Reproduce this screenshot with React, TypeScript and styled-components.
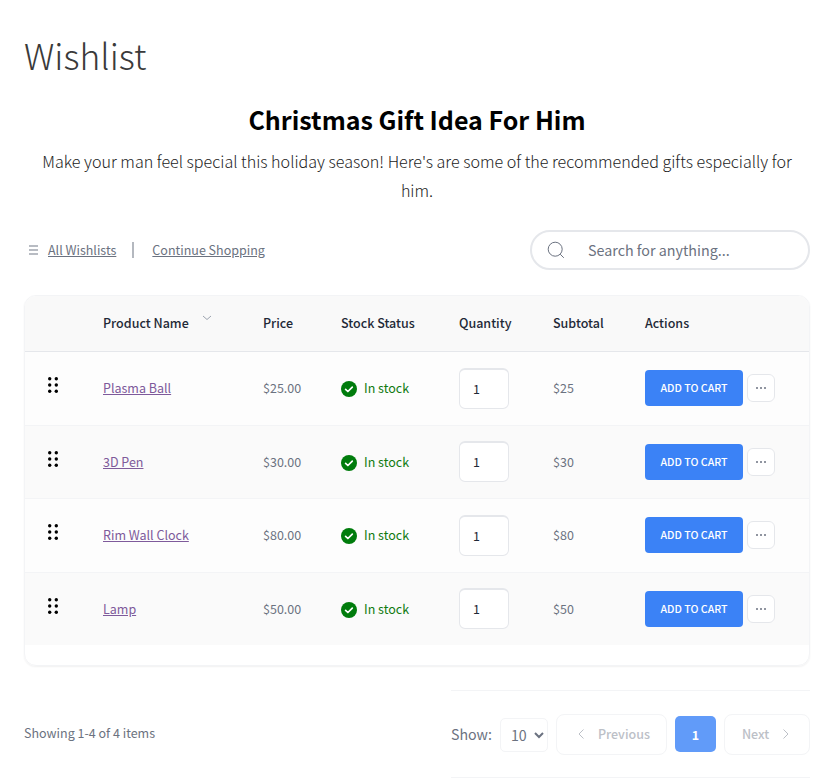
import React from "react";
import styled, { createGlobalStyle } from "styled-components";

const Global = createGlobalStyle`
  * { box-sizing: border-box; }
  html, body { margin: 0; padding: 0; background: #fff; }
  body { font-family: "Noto Sans CJK SC", "Noto Sans", sans-serif; color: #374151; overflow: hidden; }
`;

const Page = styled.div`
  width: 837px;
  height: 781px;
  padding: 24px 27px 0 24px;
  overflow: hidden;
`;
const PageTitle = styled.h1`
  margin: 0;
  font-size: 35.4px;
  line-height: 62px;
  font-weight: 300;
  color: #3a3a3a;
`;
const Intro = styled.div`
  text-align: center;
  margin-top: 13px;
`;
const IntroTitle = styled.h2`
  margin: 0;
  font-size: 25px;
  line-height: 40px;
  font-weight: 700;
  color: #000;
`;
const IntroText = styled.p`
  margin: 8px 0 0;
  padding: 0 16px;
  font-size: 16.1px;
  line-height: 29px;
  font-weight: 300;
  color: #222;
`;
const Toolbar = styled.div`
  display: flex;
  align-items: center;
  justify-content: space-between;
  margin-top: 25px;
  height: 40px;
`;
const ToolLinks = styled.div`
  display: flex;
  align-items: center;
  padding-left: 5px;
  font-size: 12.5px;
  line-height: 16px;
  color: #6b7280;
`;
const ToolLink = styled.a`
  color: #6b7280;
  text-decoration: underline;
`;
const Divider = styled.span`
  width: 2px;
  height: 16px;
  background: #b4b8bf;
  margin: 0 18px 0 16px;
`;
const MenuIcon = styled.svg`
  width: 9px;
  height: 10px;
  margin-right: 10px;
`;
const Search = styled.div`
  width: 280px;
  height: 40px;
  border: 2px solid #e5e7eb;
  border-radius: 20px;
  display: flex;
  align-items: center;
  padding-left: 15px;
  font-size: 14.3px;
  line-height: 18px;
  color: #6b7280;
  gap: 23px;
  background: #fff;
`;
const Card = styled.div`
  margin-top: 25px;
  height: 371px;
  border: 1px solid #f3f4f6;
  border-radius: 12px;
  box-shadow: 0 1px 2px rgba(0, 0, 0, 0.06);
  overflow: hidden;
`;
const Row = styled.div<{ $shade?: boolean; $height: number }>`
  display: grid;
  grid-template-columns: 78px 160px 78px 118px 94px 92px 1fr;
  align-items: center;
  height: ${(p) => p.$height}px;
  padding-bottom: 1px;
  background: ${(p) => (p.$shade ? "#fafafa" : "#fdfdfd")};
  border-bottom: 1px solid #f3f4f6;
  font-size: 12.5px;
  line-height: 16px;
  color: #6b7280;
  &:last-child { border-bottom: none; }
`;
const Head = styled(Row)`
  background: #f9f9f9;
  border-bottom: 1px solid #e5e7eb;
  font-weight: 500;
  color: #1f2937;
`;
const HeadName = styled.div`
  display: flex;
  align-items: flex-start;
  gap: 13px;
`;
const Drag = styled.div`
  padding-left: 23px;
  display: flex;
  margin-top: -6px;
`;
const NameLink = styled.a`
  color: #7e5a9b;
  text-decoration: underline;
`;
const Stock = styled.div`
  display: flex;
  align-items: center;
  gap: 7px;
  color: #107a10;
`;
const StockIcon = styled.svg`
  margin-top: 2px;
`;
const Qty = styled.div`
  width: 50px;
  height: 41px;
  border: 1px solid #e5e7eb;
  border-top-width: 2px;
  border-radius: 6px;
  background: #fff;
  padding-left: 13px;
  display: flex;
  align-items: center;
  color: #1f2937;
`;
const Actions = styled.div`
  display: flex;
  align-items: center;
  gap: 4px;
`;
const CartButton = styled.button`
  width: 98px;
  height: 36px;
  background: #3b82f6;
  color: #fff;
  border: 0;
  border-radius: 4px;
  font: 500 10.6px/14px "Noto Sans CJK SC", sans-serif;
  padding: 0;
`;
const MoreButton = styled.button`
  width: 28px;
  height: 28px;
  background: #fff;
  border: 1px solid #e5e7eb;
  border-radius: 6px;
  padding: 0;
  display: flex;
  align-items: center;
  justify-content: center;
`;
const Footer = styled.div`
  display: flex;
  justify-content: space-between;
  margin-top: 24px;
`;
const Showing = styled.div`
  font-size: 12.5px;
  line-height: 18px;
  color: #6b7280;
  margin-top: 34px;
`;
const Pager = styled.div`
  width: 359px;
  height: 88px;
  border-top: 1px solid #f3f4f6;
  border-bottom: 1px solid #f3f4f6;
  display: flex;
  align-items: center;
  font-size: 14.2px;
  color: #6b7280;
`;
const ShowSelect = styled.select`
  width: 48px;
  height: 34px;
  margin: 1px 8px 0;
  border: 1px solid #f3f4f6;
  border-radius: 5px;
  background: #fff;
  color: #6b7280;
  font: 14.2px "Noto Sans CJK SC", sans-serif;
  padding-left: 6px;
`;
const PageNav = styled.div<{ $width: number; $inset: number }>`
  width: ${(p) => p.$width}px;
  height: 41px;
  margin-top: 1px;
  padding-left: ${(p) => p.$inset}px;
  padding-bottom: 1px;
  border: 1px solid #f3f4f6;
  border-radius: 8px;
  display: flex;
  align-items: center;
  gap: 13px;
  font-size: 12.5px;
  line-height: 16px;
  font-weight: 500;
  color: #bcc0c7;
`;
const PageCurrent = styled.div`
  width: 41px;
  height: 36px;
  margin: 0 8px;
  border-radius: 5px;
  background: #619bf9;
  color: #fff;
  font-size: 12.5px;
  font-weight: 700;
  display: flex;
  align-items: center;
  justify-content: center;
`;

const DragDots = () => (
  <svg width="10" height="16" viewBox="0 0 10 16" fill="#000">
    {[1.8, 8, 14.2].flatMap((y) => [0, 1].map((i) => <circle key={`${y}-${i}`} cx={i ? 8.3 : 1.7} cy={y} r="1.7" />))}
  </svg>
);
const Check = () => (
  <StockIcon width="16" height="16" viewBox="0 0 16 16">
    <circle cx="8" cy="8" r="8" fill="#007c0c" />
    <path d="M4.6 8.3l2.3 2.2 4.4-4.4" fill="none" stroke="#fff" strokeWidth="1.7" strokeLinecap="round" strokeLinejoin="round" />
  </StockIcon>
);
const Dots = () => (
  <svg width="12" height="4" viewBox="0 0 12 4" fill="#6b7280">
    <circle cx="2" cy="2" r="1" />
    <circle cx="6" cy="2" r="1" />
    <circle cx="10" cy="2" r="1" />
  </svg>
);

const products = [
  { name: "Plasma Ball", price: "$25.00", sub: "$25", h: 74, shade: false },
  { name: "3D Pen", price: "$30.00", sub: "$30", h: 73, shade: true },
  { name: "Rim Wall Clock", price: "$80.00", sub: "$80", h: 74, shade: false },
  { name: "Lamp", price: "$50.00", sub: "$50", h: 72, shade: true },
];

export default function App() {
  return (
    <Page>
      <Global />
      <PageTitle>Wishlist</PageTitle>
      <Intro>
        <IntroTitle>Christmas Gift Idea For Him</IntroTitle>
        <IntroText>
          Make your man feel special this holiday season! Here's are some of the recommended gifts especially for him.
        </IntroText>
      </Intro>
      <Toolbar>
        <ToolLinks>
          <MenuIcon viewBox="0 0 9 10" fill="#b8bcc3">
            <rect y="0" width="9" height="2" />
            <rect y="4" width="9" height="2" />
            <rect y="8" width="9" height="2" />
          </MenuIcon>
          <ToolLink>All Wishlists</ToolLink>
          <Divider />
          <ToolLink>Continue Shopping</ToolLink>
        </ToolLinks>
        <Search>
          <svg width="18" height="18" viewBox="0 0 18 18" fill="none" stroke="#6b7280" strokeWidth="1">
            <circle cx="8.2" cy="8.2" r="7" />
            <path d="M13.2 13.2l3.6 3.6" />
          </svg>
          <span>Search for anything...</span>
        </Search>
      </Toolbar>
      <Card>
        <Head $height={56}>
          <div />
          <HeadName>
            Product Name
            <svg width="10" height="6" viewBox="0 0 10 6" fill="none" stroke="#9ca3af" strokeWidth="1">
              <path d="M1 1l4 3.5L9 1" />
            </svg>
          </HeadName>
          <div>Price</div>
          <div>Stock Status</div>
          <div>Quantity</div>
          <div>Subtotal</div>
          <div>Actions</div>
        </Head>
        {products.map((p) => (
          <Row key={p.name} $height={p.h} $shade={p.shade}>
            <Drag>
              <DragDots />
            </Drag>
            <div>
              <NameLink>{p.name}</NameLink>
            </div>
            <div>{p.price}</div>
            <Stock>
              <Check />
              In stock
            </Stock>
            <Qty>1</Qty>
            <div>{p.sub}</div>
            <Actions>
              <CartButton>ADD TO CART</CartButton>
              <MoreButton>
                <Dots />
              </MoreButton>
            </Actions>
          </Row>
        ))}
      </Card>
      <Footer>
        <Showing>Showing 1-4 of 4 items</Showing>
        <Pager>
          Show:
          <ShowSelect defaultValue="10">
            <option>10</option>
          </ShowSelect>
          <PageNav $width={111} $inset={20}>
            <svg width="8" height="12" viewBox="0 0 8 12" fill="none" stroke="#bcc0c7" strokeWidth="1">
              <path d="M6.5 1.5L2 6l4.5 4.5" />
            </svg>
            Previous
          </PageNav>
          <PageCurrent>1</PageCurrent>
          <PageNav $width={86} $inset={17}>
            Next
            <svg width="8" height="12" viewBox="0 0 8 12" fill="none" stroke="#bcc0c7" strokeWidth="1">
              <path d="M1.5 1.5L6 6l-4.5 4.5" />
            </svg>
          </PageNav>
        </Pager>
      </Footer>
    </Page>
  );
}
